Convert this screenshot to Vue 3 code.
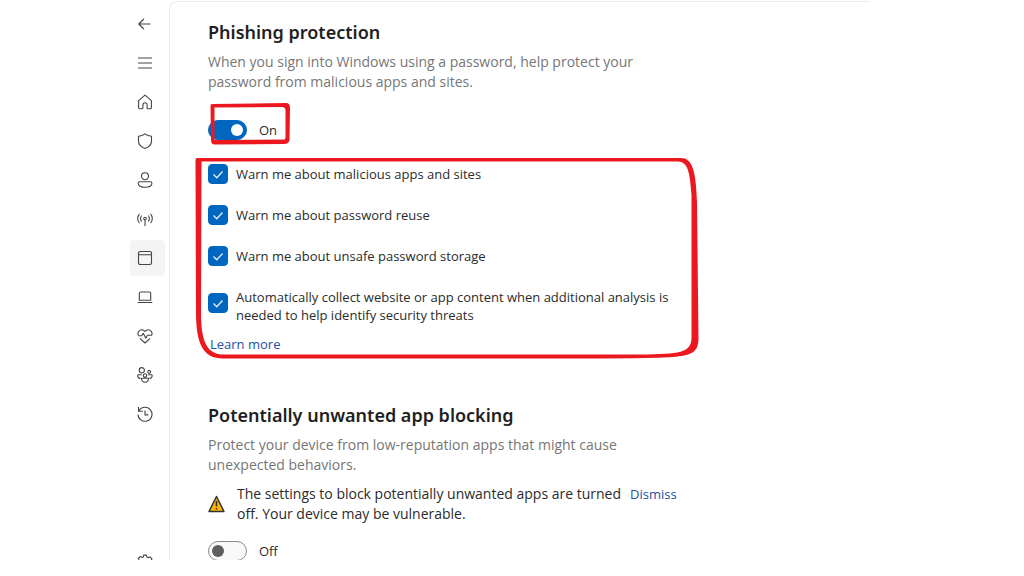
<script setup>
import { ref } from 'vue'

const nav = [
  { id: 'back', label: 'Back', d: 'M13.500 8H2M6.800 3L1.800 8l5 5' },
  { id: 'menu', label: 'Menu', d: 'M1 3h14M1 8h14M1 13h14' },
  { id: 'home', label: 'Home', d: 'M1.6 6.6L8 1.2l6.4 5.4v7.2a.9.9 0 0 1-.9.9h-2.6a.8.8 0 0 1-.8-.8v-3a2.1 2.1 0 0 0-4.2 0v3a.8.8 0 0 1-.8.8H2.5a.9.9 0 0 1-.9-.9z' },
  { id: 'virus', label: 'Virus & threat protection', d: 'M8 .9c2 1.6 4 2.2 6.5 2.4V8c0 3.500-2.300 5.900-6.500 7.400C3.800 13.900 1.500 11.500 1.500 8V3.300C4 3.100 6 2.500 8 .9z' },
  { id: 'account', label: 'Account protection', d: 'M8 .7a3.500 3.500 0 1 1 0 7a3.500 3.500 0 1 1 0-7zM2.800 9.800h10.400c1 0 1.700.7 1.700 1.500c0 2.300-2.700 4-6.900 4s-6.900-1.700-6.900-4c0-.8.7-1.500 1.700-1.500z' },
  { id: 'network', label: 'Firewall & network protection', d: 'M2.500 2.800a7 7 0 0 0 0 9.400M13.500 2.800a7 7 0 0 1 0 9.400M4.800 4.500a4.600 4.600 0 0 0 0 6M11.200 4.500a4.600 4.600 0 0 1 0 6M8 6.200a1.300 1.300 0 1 1 0 2.600a1.300 1.300 0 1 1 0-2.600zM8 8.800V15' },
  { id: 'apps', label: 'App & browser control', d: 'M3.200 1.500h9.600a1.700 1.700 0 0 1 1.700 1.700v9.600a1.700 1.700 0 0 1-1.700 1.700H3.200a1.700 1.700 0 0 1-1.700-1.700V3.200a1.700 1.700 0 0 1 1.700-1.700zM1.500 4.800h13' },
  { id: 'device', label: 'Device security', d: 'M3.500 3h9A1.200 1.200 0 0 1 13.700 4.200v7H2.300v-7A1.200 1.200 0 0 1 3.500 3zM.7 13.500h14.600' },
  { id: 'health', label: 'Device performance & health', d: 'M1.300 7C-.2 3.200 4.600-.4 8 3.400C11.400-.4 16.200 3.200 14.700 7M.8 7.800h3.800L6.300 5.300l2.500 5L10.500 7.300h4.700M3 10.300L8 15l5-4.700' },
  { id: 'family', label: 'Family options', d: 'M4.800 .6a2.600 2.600 0 1 1 0 5.200a2.600 2.600 0 1 1 0-5.200zM12.200 3.400a1.400 1.400 0 1 1 0 2.800a1.400 1.400 0 1 1 0-2.800zM8 6.800a1.700 1.700 0 1 1 0 3.400a1.700 1.700 0 1 1 0-3.400zM4.900 7.800H1c-.8 2 .5 3.600 2.500 3.600M11.100 7.800H15c.6 2-.7 3.600-2.600 3.600M4.500 11.300h7c0 2.500-1.300 3.900-3.500 3.900s-3.500-1.400-3.500-3.900z' },
  { id: 'history', label: 'Protection history', d: 'M1.800 5A7 7 0 1 1 1 8.500M1.500 1v4.300h4.300M8 4.500v4.400h3.300' }
]
const gear = 'M6.600 1.100h2.800l.5 2 1.300.6 1.900-.9 1.900 2-.9 1.900.5 1.200 1.300.5v2l-1.700.6-.5 1.300.8 1.700-1.800 1.800-1.800-.8-1.400.6-.6 1.600H7.100l-.7-1.600-1.400-.6-1.700.8-1.900-1.900.8-1.600-.5-1.300L.1 10V8l1.600-.6.5-1.200-.8-1.800 1.900-1.900 1.800.9 1.200-.5z'

const active = ref('apps')
const phishing = ref(true)
const blocking = ref(false)
const options = ref([
  { id: 'malicious', lines: ['Warn me about malicious apps and sites'], on: true },
  { id: 'reuse', lines: ['Warn me about password reuse'], on: true },
  { id: 'storage', lines: ['Warn me about unsafe password storage'], on: true },
  { id: 'collect', lines: ['Automatically collect website or app content when additional analysis is', 'needed to help identify security threats'], on: true }
])
</script>

<template>
  <div class="window">
    <nav class="rail" aria-label="Security sections">
      <button v-for="item in nav" :key="item.id" type="button" class="rail-item" :class="{ active: active === item.id }" :aria-label="item.label">
        <svg viewBox="0 0 16 16" aria-hidden="true"><path :d="item.d" /></svg>
      </button>
      <button type="button" class="rail-item settings" aria-label="Settings">
        <svg viewBox="0 0 16 16" aria-hidden="true"><path :d="gear" /></svg>
      </button>
    </nav>

    <main class="panel">
      <section>
        <h2>Phishing protection</h2>
        <p class="description">
          <span>When you sign into Windows using a password, help protect your</span>
          <span>password from malicious apps and sites.</span>
        </p>
        <div class="switch-row marked">
          <input id="phishing" v-model="phishing" type="checkbox" role="switch" class="switch" />
          <label for="phishing">{{ phishing ? 'On' : 'Off' }}</label>
          <svg class="mark mark-small" viewBox="0 0 82 42" aria-hidden="true">
            <path fill-rule="evenodd" d="M3 1L77 0Q81 0 81 5L80.500 37Q80 41 75 41L6 41.500Q2 41.500 2 37L1.500 3Q1.500 1 3 1zM5.500 4.500L5.500 37L75.500 36.500Q76.500 36 76.500 34L76.500 7Q76 4 73 4z" />
          </svg>
        </div>
        <div class="options marked">
          <div v-for="option in options" :key="option.id" class="option" :class="{ tall: option.lines.length > 1 }">
            <span class="box">
              <input :id="option.id" v-model="option.on" type="checkbox" />
              <svg v-if="option.on" viewBox="0 0 20 20" aria-hidden="true"><path d="M5.500 10.500l3.300 3.300L14.500 7.500" /></svg>
            </span>
            <label :for="option.id"><span v-for="line in option.lines" :key="line">{{ line }} </span></label>
          </div>
          <a href="#learn" class="learn">Learn more</a>
          <svg class="mark mark-large" viewBox="195 157 505 203" aria-hidden="true">
            <path fill-rule="evenodd" d="M197 158L681 158C692 158 696 170 697 202L698.500 338C698.500 354 690 355 673 357Q650 358.500 560 358.500L224 358.500C203 359 196 344 196 312L195.500 160Q195.500 158 197 158zM201.500 161.500L201 318C202 345 209 355 225 354.500L640 354.500C680 354 691 353 691.500 338L691.500 195C690 173 688 161.500 678 161.500z" />
          </svg>
        </div>
      </section>

      <section class="blocking">
        <h2>Potentially unwanted app blocking</h2>
        <p class="description">
          <span>Protect your device from low-reputation apps that might cause</span>
          <span>unexpected behaviors.</span>
        </p>
        <div class="warning">
          <svg class="alert" viewBox="0 0 17 18" aria-hidden="true">
            <path d="M8.500 1.500L16 16.500H1z" fill="#fdb404" stroke="#333" stroke-width="1.500" stroke-linejoin="round" />
            <path d="M8.500 6v5.500M8.500 13v1.600" fill="none" stroke="#333" stroke-width="1.600" />
          </svg>
          <p>
            <span>The settings to block potentially unwanted apps are turned</span>
            <span>off. Your device may be vulnerable.</span>
          </p>
          <a href="#dismiss">Dismiss</a>
        </div>
        <div class="switch-row">
          <input id="blocking" v-model="blocking" type="checkbox" role="switch" class="switch" />
          <label for="blocking">{{ blocking ? 'On' : 'Off' }}</label>
        </div>
      </section>
    </main>
  </div>
</template>

<style>
body {
  background: #fff;
}
</style>

<style scoped>
* {
  box-sizing: border-box;
}
.window {
  display: flex;
  width: 85%;
  height: calc(100vh - 16px);
  padding-left: 130px;
  overflow: hidden;
  color: #2b2b2b;
  font: 14px/20px "Open Sans", "Noto Sans", sans-serif;
}
.rail {
  display: flex;
  flex: none;
  flex-direction: column;
  gap: 3px;
  width: 39px;
  padding-top: 6px;
}
.rail-item {
  display: grid;
  flex: none;
  place-items: center;
  width: 35px;
  height: 36px;
  padding: 0 5px 0 0;
  border: 0;
  border-radius: 4px;
  background: none;
}
.rail-item svg {
  width: 16px;
  height: 16px;
  fill: none;
  stroke: #444;
  stroke-width: 1.1;
  stroke-linejoin: round;
}
.rail-item.active {
  background: #f4f4f4;
}
.rail-item.settings {
  margin-top: auto;
  margin-bottom: -20px;
}
.panel {
  flex: 1;
  min-width: 0;
  margin-top: 1px;
  padding: 16px 0 0 38px;
  border-top: 1px solid #ececec;
  border-left: 1px solid #ececec;
  border-top-left-radius: 8px;
  white-space: nowrap;
}
h2 {
  margin: 0;
  color: #1f1f1f;
  font-family: "Noto Sans", "Open Sans", sans-serif;
  font-size: 18px;
  font-weight: 600;
  line-height: 28px;
}
p {
  margin: 0;
}
p span,
label span {
  display: block;
}
.description {
  margin-top: 6px;
  color: #767676;
}
.marked {
  position: relative;
}
.mark {
  position: absolute;
  fill: #ec1820;
  pointer-events: none;
}
.mark-small {
  top: -17px;
  left: 1px;
  width: 82px;
  height: 42px;
}
.mark-large {
  top: -7px;
  left: -13px;
  width: 505px;
  height: 203px;
}
.switch-row {
  display: flex;
  gap: 12px;
  align-items: center;
  width: max-content;
  margin-top: 28px;
  font-size: 13px;
}
.switch {
  display: flex;
  align-items: center;
  width: 39px;
  height: 20px;
  margin: 0;
  padding: 0 3px;
  border: 1px solid #8a8a8a;
  border-radius: 10px;
  background: #f8f8f8;
  appearance: none;
}
.switch::before {
  width: 12px;
  height: 12px;
  border-radius: 50%;
  background: #5e5e5e;
  content: "";
}
.switch:checked {
  justify-content: flex-end;
  border-color: #0067c0;
  background: #0067c0;
}
.switch:checked::before {
  background: #fff;
}
.options {
  display: flex;
  flex-direction: column;
  gap: 21px;
  align-items: flex-start;
  margin-top: 24px;
  font-size: 13px;
  line-height: 18px;
}
.option {
  display: flex;
  gap: 8px;
  align-items: center;
}
.option.tall {
  align-items: flex-start;
  margin-top: 1px;
}
.tall .box {
  margin-top: 5px;
}
.box {
  display: grid;
  width: 20px;
  height: 20px;
}
.box > * {
  grid-area: 1 / 1;
  width: 20px;
  height: 20px;
  margin: 0;
}
.box input {
  border: 1px solid #8a8a8a;
  border-radius: 4px;
  appearance: none;
}
.box input:checked {
  border-color: #0067c0;
  background: #0067c0;
}
.box svg {
  fill: none;
  stroke: #e4f0fa;
  stroke-width: 1.3;
  pointer-events: none;
}
a {
  color: #1d4fa3;
  font-size: 13px;
  text-decoration: none;
}
.learn {
  margin: -10px 0 0 2px;
}
.blocking {
  margin-top: 48px;
}
.warning {
  display: flex;
  gap: 9px;
  margin-top: 9px;
}
.alert {
  flex: none;
  align-self: center;
  width: 17px;
  height: 18px;
  margin-right: 3px;
}
.blocking .switch-row {
  margin-top: 17px;
}
</style>
